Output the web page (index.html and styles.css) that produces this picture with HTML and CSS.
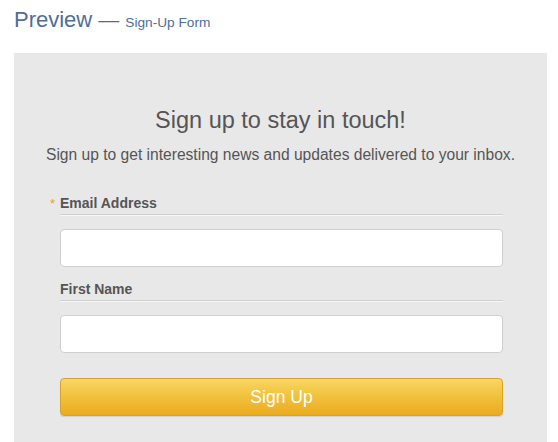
FILE: index.html
```html
<!DOCTYPE html>
<html>
<head>
<meta charset="utf-8">
<link rel="stylesheet" href="styles.css">
</head>
<body>
<header class="page-head">
  <span class="head-main">Preview</span>
  <span class="head-dash">—</span>
  <span class="head-sub">Sign-Up Form</span>
</header>
<section class="panel">
  <h1 class="title">Sign up to stay in touch!</h1>
  <p class="subtitle">Sign up to get interesting news and updates delivered to your inbox.</p>
  <form class="form">
    <div class="field">
      <label class="label"><span class="req">*</span>Email Address</label>
      <input class="input" type="text">
    </div>
    <div class="field">
      <label class="label">First Name</label>
      <input class="input" type="text">
    </div>
    <button class="btn" type="button">Sign Up</button>
  </form>
</section>
</body>
</html>
```

FILE: styles.css
```css
html, body {
  margin: 0;
  padding: 0;
  background: #ffffff;
  font-family: "Liberation Sans", Arial, sans-serif;
}
body {
  padding: 0 11px 0 14px;
  height: 442px;
  overflow: hidden;
}
.page-head {
  display: flex;
  align-items: baseline;
  height: 53px;
  padding-top: 8px;
  box-sizing: border-box;
  color: #4e6e98;
}
.head-main {
  font-size: 22px;
  line-height: 24px;
}
.head-dash {
  font-size: 21px;
  margin: 0 6px 0 6px;
}
.head-sub {
  font-size: 13.7px;
}
.panel {
  background: #e8e8e8;
  height: 400px;
  padding-top: 53px;
  box-sizing: border-box;
}
.title {
  margin: 0;
  text-align: center;
  font-weight: normal;
  font-size: 23.5px;
  line-height: 28px;
  color: #555555;
}
.subtitle {
  margin: 12px 0 0 0;
  text-align: center;
  font-size: 15.6px;
  line-height: 18px;
  color: #555555;
}
.form {
  margin: 31px 0 0 46px;
  width: 443px;
  display: flex;
  flex-direction: column;
}
.field {
  display: flex;
  flex-direction: column;
  margin-bottom: 14px;
}
.label {
  position: relative;
  font-size: 14px;
  font-weight: bold;
  line-height: 17px;
  color: #555555;
  padding-bottom: 2px;
  border-bottom: 1px solid #cfcfcf;
  box-shadow: 0 1px 0 #f7f7f7;
}
.req {
  position: absolute;
  left: -10px;
  top: 0;
  color: #e5a22b;
  font-weight: normal;
  font-size: 13px;
}
.input {
  margin-top: 14px;
  height: 38px;
  box-sizing: border-box;
  border: 1px solid #cfcfcf;
  border-radius: 4px;
  background: #ffffff;
}
.btn {
  margin-top: 11px;
  height: 38px;
  border: 1px solid #d9a32a;
  border-radius: 4px;
  background: linear-gradient(#f9d662, #f2c33f 45%, #ebab1f);
  color: #ffffff;
  font-family: "Liberation Sans", Arial, sans-serif;
  font-size: 17.5px;
  box-shadow: 0 1px 1px rgba(0,0,0,0.1);
}
```
